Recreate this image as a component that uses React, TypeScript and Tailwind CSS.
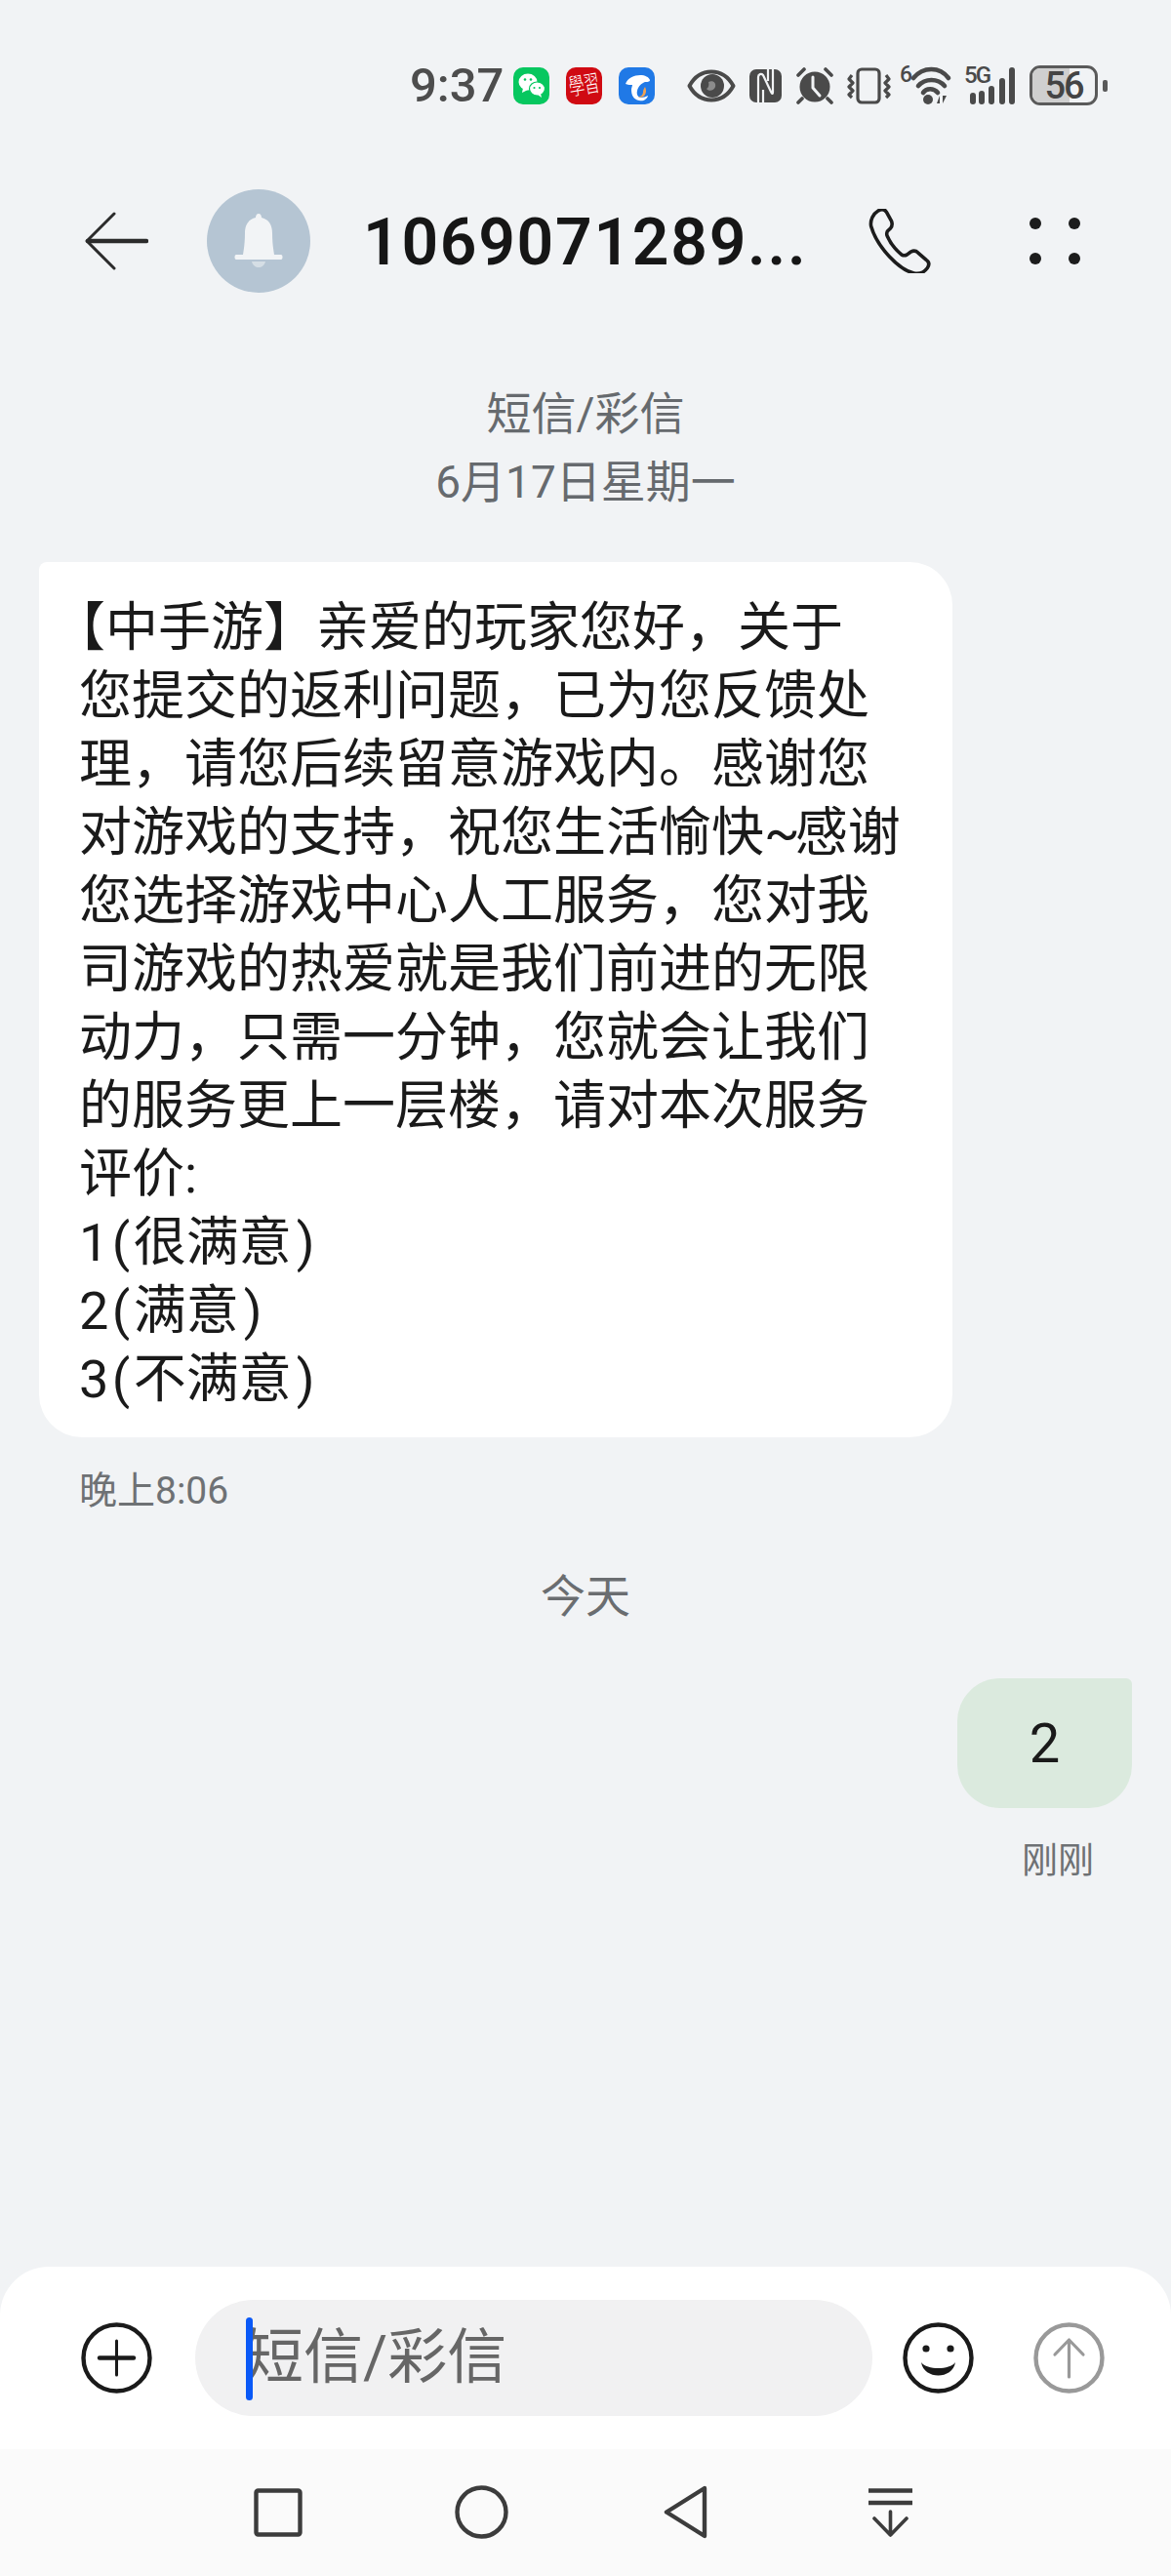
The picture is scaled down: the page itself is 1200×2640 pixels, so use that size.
const LINES = [
  <div key="a" className="whitespace-nowrap -ml-[27px]">【中手游】亲爱的玩家您好，关于</div>,
  <div key="b" className="whitespace-nowrap">您提交的返利问题，已为您反馈处</div>,
  <div key="c" className="whitespace-nowrap">理，请您后续留意游戏内。感谢您</div>,
  <div key="d" className="whitespace-nowrap">对游戏的支持，祝您生活愉快<span className="tracking-[-5px]">~</span>感谢</div>,
  <div key="e" className="whitespace-nowrap">您选择游戏中心人工服务，您对我</div>,
  <div key="f" className="whitespace-nowrap">司游戏的热爱就是我们前进的无限</div>,
  <div key="g" className="whitespace-nowrap">动力，只需一分钟，您就会让我们</div>,
  <div key="h" className="whitespace-nowrap">的服务更上一层楼，请对本次服务</div>,
  <div key="i" className="whitespace-nowrap">评价<span className="tracking-[3px]">:</span></div>,
  <div key="j" className="whitespace-nowrap"><span className="tracking-[3.5px]">1(</span>很满意<span className="ml-[5px]">)</span></div>,
  <div key="k" className="whitespace-nowrap"><span className="tracking-[3.5px]">2(</span>满意<span className="ml-[5px]">)</span></div>,
  <div key="l" className="whitespace-nowrap"><span className="tracking-[3.5px]">3(</span>不满意<span className="ml-[5px]">)</span></div>,
];

function WeChat() {
  return (
    <svg viewBox="0 0 37 38" className="w-[37px] h-[38px] shrink-0">
      <rect width="37" height="38" rx="10" fill="#07c75f" />
      <ellipse cx="15" cy="15" rx="9.5" ry="8.5" fill="#fff" />
      <path d="M10 21l-1 5 6-3z" fill="#fff" />
      <ellipse cx="24.5" cy="22" rx="8" ry="7" fill="#fff" stroke="#07c75f" strokeWidth="1.2" />
      <path d="M28 27l1 4-4-3z" fill="#fff" />
      <circle cx="12" cy="12.5" r="1.3" fill="#07c75f" />
      <circle cx="18" cy="12.5" r="1.3" fill="#07c75f" />
      <circle cx="21.5" cy="21" r="1.1" fill="#07c75f" />
      <circle cx="27" cy="21" r="1.1" fill="#07c75f" />
    </svg>
  );
}

function RedApp() {
  return (
    <div className="w-[37px] h-[38px] shrink-0 rounded-[10px] bg-[#d00a12] flex items-center justify-center overflow-hidden">
      <span className="text-[16px] leading-none text-white font-light whitespace-nowrap -rotate-[10deg] scale-y-150 tracking-[-0.5px]">學習</span>
    </div>
  );
}

function BlueApp() {
  return (
    <svg viewBox="0 0 37 38" className="w-[37px] h-[38px] shrink-0">
      <rect width="37" height="38" rx="10" fill="#2079e6" />
      <path d="M7 17c2-6 9-9 15-9 5 0 9 2 10 5 0 2-3 2-5 2-3 1-7 4-8 9-1 4 1 7 4 7 2 0 5-1 7-2-1 4-5 6-9 5-6-1-8-6-8-11 0-2 1-4 1-5-2 0-5 0-7-1z" fill="#fff" />
      <path d="M27 20c2 4 1 8-2 10-2 1-4 1-5 0 3 0 5-2 5-5 0-2 1-3 2-5z" fill="#f1a253" />
    </svg>
  );
}

function Eye() {
  return (
    <svg viewBox="0 0 50 34" className="w-[50px] h-[34px] shrink-0 ml-[33px]">
      <path d="M2.5 17C8 7 16 2.5 25 2.5S42 7 47.500 17C42 27 34 31.500 25 31.500S8 27 2.500 17z" fill="none" stroke="#4a4a4a" strokeWidth="4" strokeLinejoin="round" />
      <circle cx="26" cy="17" r="12" fill="#4a4a4a" />
      <path d="M22 13c5-2 8 1 7 5-1 4-7 5-9 2 2-1 3-4 2-7z" fill="#8c8c8c" />
    </svg>
  );
}

function Nfc() {
  return (
    <svg viewBox="0 0 35 36" className="w-[35px] h-[36px] shrink-0 ml-[13px]">
      <rect x="1" y="1" width="33" height="34" rx="7" fill="#4a4a4a" />
      <path d="M10 36V9c0-3 3-4 5-2l8 17c1 2 2 3 2 0V0" fill="none" stroke="#f1f3f5" strokeWidth="2.2" />
      <path d="M15 36V22M20 0v13" fill="none" stroke="#f1f3f5" strokeWidth="2.2" />
    </svg>
  );
}

function Alarm() {
  return (
    <svg viewBox="0 0 40 38" className="w-[40px] h-[38px] shrink-0 ml-[13px]">
      <circle cx="20" cy="20" r="15.500" fill="#4a4a4a" />
      <path d="M18 10v11l7 8" fill="none" stroke="#f1f3f5" strokeWidth="3" strokeLinecap="round" strokeLinejoin="round" />
      <path d="M3 8l6-6M37 8l-6-6M7 32l-4 4M33 32l4 4" stroke="#4a4a4a" strokeWidth="3.6" strokeLinecap="round" />
    </svg>
  );
}

function Vibrate() {
  return (
    <svg viewBox="0 0 46 38" className="w-[46px] h-[38px] shrink-0 ml-[13px]">
      <rect x="11" y="2" width="22" height="34" rx="4" fill="none" stroke="#4a4a4a" strokeWidth="3.2" />
      <path d="M5 8 2 12l4 4-4 4 4 4-4 4 3 3M40 8l3 4-4 4 4 4-4 4 4 4-3 3" fill="none" stroke="#4a4a4a" strokeWidth="3.200" strokeLinejoin="round" />
    </svg>
  );
}

function Wifi() {
  return (
    <div className="relative w-[56px] h-[39px] shrink-0 ml-[8px]">
      <span className="absolute left-0 top-[-4px] text-[23px] leading-[26px] font-medium text-[#4a4a4a] tracking-[-1px]">6</span>
      <svg viewBox="0 0 56 39" className="w-[56px] h-[39px]">
        <path d="M14 12C24 0 41 0 50 12M19 20c7-8 20-8 27 0M24 27c3-5 11-5 15 0" fill="none" stroke="#4a4a4a" strokeWidth="4.6" strokeLinecap="round" />
        <circle cx="29" cy="34" r="5" fill="#4a4a4a" />
        <path d="M41 30l-3 8h3zM44 30v8l4-8z" fill="#4a4a4a" />
      </svg>
    </div>
  );
}

function Signal() {
  return (
    <div className="relative w-[56px] h-[39px] shrink-0 ml-[10px]">
      <span className="absolute left-0 top-[-4px] text-[24px] leading-[26px] font-medium text-[#4a4a4a] tracking-[-2px]">5G</span>
      <svg viewBox="0 0 56 39" className="w-[56px] h-[39px]">
        <path d="M9 30v6M18 28v8M28 23v13M39 15v21M49 4v32" stroke="#4a4a4a" strokeWidth="6" strokeLinecap="round" />
      </svg>
    </div>
  );
}

function Battery() {
  return (
    <div className="flex items-center ml-[11px] shrink-0">
      <div className="relative w-[70px] h-[41px] rounded-[11px] border-[3px] border-[#5a5a5a] overflow-hidden flex items-center justify-center">
        <div className="absolute left-0 top-0 bottom-0 w-[60%] bg-[#cfcfcf]" />
        <span className="relative text-[38px] leading-none font-medium text-[#444] tracking-[-2px]">56</span>
      </div>
      <div className="w-[5px] h-[12px] bg-[#5a5a5a] rounded-[2px] ml-[5px]" />
    </div>
  );
}

export default function App() {
  return (
    <div
      className="w-[1200px] h-[2640px] bg-[#f1f3f5] flex flex-col overflow-hidden"
      style={{ fontFamily: 'Roboto, "Noto Sans CJK SC", sans-serif' }}
    >
      {/* status bar */}
      <div className="h-[193px] shrink-0 pt-[67px] pl-[420px]">
        <div className="flex items-center h-[41px]">
          <span className="w-[92px] shrink-0 text-[49px] leading-[41px] text-[#4d4d4d] font-medium whitespace-nowrap">9:37</span>
          <div className="ml-[14px] flex gap-[17px]">
            <WeChat />
            <RedApp />
            <BlueApp />
          </div>
          <Eye />
          <Nfc />
          <Alarm />
          <Vibrate />
          <Wifi />
          <Signal />
          <Battery />
        </div>
      </div>

      {/* header */}
      <div className="h-[107px] shrink-0 flex items-center pl-[86px]">
        <svg viewBox="0 0 66 60" className="w-[66px] h-[60px] shrink-0">
          <path d="M31 2 3 30l28 28" fill="none" stroke="#2b2b2b" strokeWidth="3" strokeLinecap="round" strokeLinejoin="round" />
          <path d="M4 30h60" stroke="#2b2b2b" strokeWidth="4.4" strokeLinecap="round" />
        </svg>
        <div className="ml-[60px] w-[106px] h-[106px] rounded-full bg-[#b5c5d3] flex items-center justify-center shrink-0">
          <svg viewBox="0 0 52 56" className="w-[52px] h-[56px]">
            <path d="M26 0c2 0 3 2 3 4 8 2 11 8 11 16 0 9 1 16 2 22h7c2 0 2 5 0 5H3c-2 0-2-5 0-5h7c1-6 2-13 2-22 0-8 3-14 11-16 0-2 1-4 3-4z" fill="#f2f4f6" />
            <path d="M19 49h14c-1 4-4 6-7 6s-6-2-7-6z" fill="#d5dee5" />
          </svg>
        </div>
        <span className="ml-[54px] w-[460px] shrink-0 pt-[5px] text-[66px] leading-none font-semibold text-[#161616] whitespace-nowrap tracking-[1.7px]">1069071289...</span>
        <svg viewBox="3 1 60 63" className="ml-[58px] w-[66px] h-[66px] shrink-0">
          <path d="M11 3c3-2 6-2 8 1l5 9c1 3 1 5-1 7l-3 3c-1 2-1 3 0 5 3 7 8 13 14 18 2 1 3 1 5 0l4-3c2-1 5-1 7 1l8 7c3 2 3 5 1 8-3 4-8 6-13 5C32 61 10 39 4 18 3 12 6 6 11 3z" fill="none" stroke="#1c1c1c" strokeWidth="3.4" strokeLinejoin="round" />
        </svg>
        <div className="ml-[99px] grid grid-cols-2 gap-x-[28px] gap-y-[24px] shrink-0">
          <div className="w-[12px] h-[12px] rounded-full bg-[#1c1c1c]" />
          <div className="w-[12px] h-[12px] rounded-full bg-[#1c1c1c]" />
          <div className="w-[12px] h-[12px] rounded-full bg-[#1c1c1c]" />
          <div className="w-[12px] h-[12px] rounded-full bg-[#1c1c1c]" />
        </div>
      </div>

      {/* conversation */}
      <div className="flex-1 flex flex-col pt-[89px] px-[40px]">
        <div className="text-center text-[46px] leading-[70px] text-[#666a6e]">短信/彩信</div>
        <div className="text-center text-[46px] leading-[70px] text-[#666a6e]">6月17日星期一</div>

        <div className="mt-[47px] w-[936px] bg-white rounded-[44px] rounded-tl-[8px] pl-[41px] pt-[33px] pb-[24px] text-[54px] leading-[70px] text-[#1a1a1a]">
          {LINES}
        </div>

        <div className="mt-[32px] ml-[41px] text-[39px] leading-[46px] text-[#6e7174]">晚上8:06</div>

        <div className="mt-[56px] text-center text-[46px] leading-[58px] text-[#6a6d70]">今天</div>

        <div className="mt-[55px] self-end w-[179px] h-[133px] bg-[#dbeade] rounded-[44px] rounded-tr-[6px] flex items-center justify-center">
          <span className="text-[56px] leading-none text-[#1a1a1a]">2</span>
        </div>
        <div className="mt-[32px] self-end mr-[39px] text-[37px] leading-[46px] text-[#6e7174]">刚刚</div>
      </div>

      {/* composer */}
      <div className="h-[187px] shrink-0 bg-white rounded-t-[50px] flex items-start pt-[34px] pl-[83px]">
        <svg viewBox="0 0 73 73" className="mt-[23px] w-[73px] h-[73px] shrink-0">
          <circle cx="36.5" cy="36.5" r="34" fill="none" stroke="#1a1a1a" strokeWidth="4.4" />
          <path d="M36.5 19v35" stroke="#1a1a1a" strokeWidth="3" strokeLinecap="round" />
          <path d="M19 36.5h35" stroke="#1a1a1a" strokeWidth="4.4" strokeLinecap="round" />
        </svg>
        <div className="relative ml-[44px] w-[694px] h-[119px] rounded-full bg-[#f1f1f2] pl-[50px] flex items-center shrink-0">
          <div className="absolute left-[52px] top-[18px] w-[7px] h-[85px] rounded-full bg-[#0a59f7]" />
          <span className="text-[61px] leading-none text-[#666]">短信/彩信</span>
        </div>
        <svg viewBox="0 0 73 73" className="mt-[23px] ml-[31px] w-[73px] h-[73px] shrink-0">
          <circle cx="36.5" cy="36.5" r="34" fill="none" stroke="#1a1a1a" strokeWidth="4.4" />
          <circle cx="24" cy="27" r="3.6" fill="#1a1a1a" />
          <circle cx="49" cy="27" r="3.6" fill="#1a1a1a" />
          <path d="M19 41c3 18 32 18 35 0-6 8-29 8-35 0z" fill="#1a1a1a" />
        </svg>
        <svg viewBox="0 0 73 73" className="mt-[23px] ml-[61px] w-[73px] h-[73px] shrink-0">
          <circle cx="36.5" cy="36.5" r="34" fill="none" stroke="#999" strokeWidth="4.4" />
          <path d="M36.5 56V18M22 33l14.5-15L51 33" fill="none" stroke="#999" strokeWidth="3.2" strokeLinecap="round" strokeLinejoin="round" />
        </svg>
      </div>

      {/* navigation */}
      <div className="h-[130px] shrink-0 bg-[#fafafa] flex items-start pl-[260px]">
        <svg viewBox="0 0 50 50" className="mt-[40px] w-[50px] h-[50px] shrink-0">
          <rect x="2.5" y="2.5" width="45" height="45" rx="2" fill="none" stroke="#3c3c3c" strokeWidth="4.4" />
        </svg>
        <svg viewBox="0 0 55 55" className="mt-[37px] ml-[156px] w-[55px] h-[55px] shrink-0">
          <circle cx="27.5" cy="27.5" r="25" fill="none" stroke="#3c3c3c" strokeWidth="4.4" />
        </svg>
        <svg viewBox="0 0 47 55" className="mt-[37px] ml-[158px] w-[47px] h-[55px] shrink-0">
          <path d="M43 3 4 27.5 43 52z" fill="none" stroke="#3c3c3c" strokeWidth="4.4" strokeLinejoin="round" />
        </svg>
        <svg viewBox="0 0 45 50" className="mt-[40px] ml-[164px] w-[45px] h-[50px] shrink-0">
          <path d="M0 2.5h45M0 15h45" stroke="#3c3c3c" strokeWidth="4.6" />
          <path d="M22.5 24v24M6 31l16.5 17L39 31" fill="none" stroke="#3c3c3c" strokeWidth="3.6" strokeLinecap="round" strokeLinejoin="round" />
        </svg>
      </div>
    </div>
  );
}
